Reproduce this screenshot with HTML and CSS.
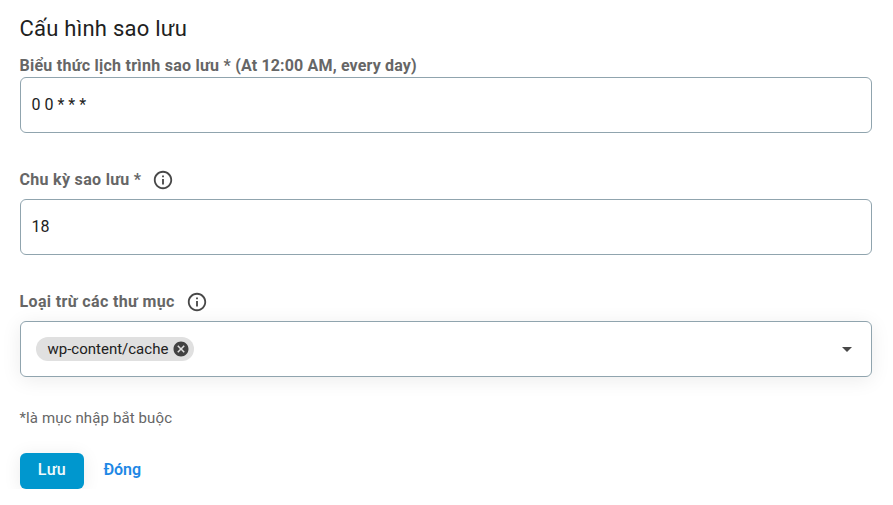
FILE: index.html
```html
<!DOCTYPE html>
<html lang="vi">
<head>
<meta charset="utf-8">
<title>Cấu hình sao lưu</title>
<link rel="stylesheet" href="styles.css">
</head>
<body>
<form class="form">
  <h1 class="title">Cấu hình sao lưu</h1>
  <div class="field">
    <div class="label"><span>Biểu thức lịch trình sao lưu * <span class="schedule">(At 12:00 AM, every day)</span></span></div>
    <div class="box">0 0 * * *</div>
  </div>
  <div class="field field-info">
    <div class="label"><span>Chu kỳ sao lưu *</span>
      <svg class="info" viewBox="0 0 24 24"><path d="M11 7h2v2h-2zm0 4h2v6h-2zm1-9C6.48 2 2 6.48 2 12s4.48 10 10 10 10-4.480 10-10S17.520 2 12 2zm0 18c-4.410 0-8-3.590-8-8s3.590-8 8-8 8 3.590 8 8-3.590 8-8 8z"/></svg>
    </div>
    <div class="box">18</div>
  </div>
  <div class="field field-info exclude">
    <div class="label"><span>Loại trừ các thư mục</span>
      <svg class="info" viewBox="0 0 24 24"><path d="M11 7h2v2h-2zm0 4h2v6h-2zm1-9C6.480 2 2 6.480 2 12s4.480 10 10 10 10-4.480 10-10S17.520 2 12 2zm0 18c-4.410 0-8-3.590-8-8s3.590-8 8-8 8 3.590 8 8-3.590 8-8 8z"/></svg>
    </div>
    <div class="box select">
      <span class="chip">wp-content/cache
        <svg class="remove" viewBox="0 0 24 24"><path d="M12 2C6.470 2 2 6.470 2 12s4.470 10 10 10 10-4.470 10-10S17.530 2 12 2zm5 13.590L15.590 17 12 13.410 8.410 17 7 15.590 10.590 12 7 8.410 8.410 7 12 10.590 15.590 7 17 8.410 13.410 12 17 15.590z"/></svg>
      </span>
      <svg class="arrow" viewBox="0 0 24 24"><path d="M7 10l5 5 5-5z"/></svg>
    </div>
  </div>
  <p class="note">*là mục nhập bắt buộc</p>
  <div class="actions">
    <button type="button" class="btn save">Lưu</button>
    <button type="button" class="btn close">Đóng</button>
  </div>
</form>
</body>
</html>
```

FILE: styles.css
```css
* { box-sizing: border-box; }
body {
  margin: 0;
  background: #fff;
  color: #212121;
  font-family: Roboto, sans-serif;
  font-size: 16px;
}
.form { padding: 13px 21px 0 20px; }
.title { margin: 0 0 0 -0.5px; font-size: 22px; line-height: 32px; font-weight: 400; letter-spacing: .25px; }
.field { margin-top: 8px; }
.label {
  display: flex;
  align-items: center;
  height: 24px;
  margin-left: -0.5px;
  color: #666;
  font-weight: 700;
  letter-spacing: .26px;
}
.schedule { letter-spacing: .16px; }
.field-info { margin-top: 35px; }
.field-info .label { height: 31px; padding-bottom: 9px; letter-spacing: .31px; }
.info { width: 22px; height: 22px; margin: 2px 0 0 10.5px; fill: #484848; }
.exclude .label { letter-spacing: .37px; }
.exclude .info { margin-left: 11px; }
.box {
  display: flex;
  align-items: center;
  height: 56px;
  padding: 0 11px 2px 10.5px;
  border: 1px solid #90a4ae;
  border-radius: 6px;
  background: #fff;
}
.select {
  justify-content: space-between;
  padding: 0 12px 0 15px;
  box-shadow: 0 3px 20px rgba(0, 0, 0, .08);
}
.chip {
  display: flex;
  align-items: center;
  width: 158px;
  height: 24px;
  padding: 0 4px 0 11.5px;
  border-radius: 12px;
  background: #e0e0e0;
  font-size: 15px;
}
.remove { flex: none; width: 18px; height: 18px; margin-left: auto; fill: #424242; }
.arrow { width: 24px; height: 24px; fill: #484848; }
.note { margin: 31px 0 0 -0.5px; font-size: 15px; line-height: 20px; letter-spacing: .12px; color: #666; }
.actions { display: flex; gap: 20px; margin-top: 25px; }
.btn {
  height: 36px;
  padding: 0 0 3px;
  border: 0;
  border-radius: 6px;
  background: none;
  font: 500 16px Roboto, sans-serif;
}
.save {
  width: 64px;
  background: #0097ce;
  color: #f0fafc;
  letter-spacing: .4px;
  box-shadow: 0 2px 18px rgba(0, 0, 0, .08);
}
.close { margin-left: -0.5px; color: #1e88e5; font-weight: 600; letter-spacing: -.05px; }
```
